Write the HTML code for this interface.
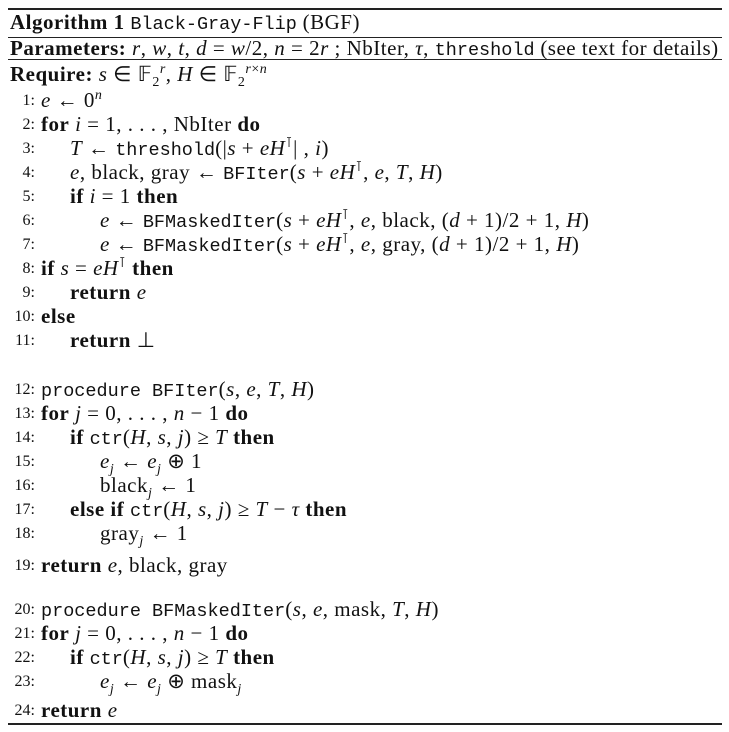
<!DOCTYPE html>
<html><head><meta charset="utf-8"><style>
body{margin:0;width:729px;height:732px;background:#fff;position:relative;overflow:hidden;font-family:"Liberation Serif",serif;color:#111;font-size:21px;letter-spacing:0.5px}
.r{position:absolute;left:8px;width:714px;background:#222}
.l{position:absolute;height:24px;line-height:24px;white-space:nowrap}
.n{position:absolute;right:694px;width:40px;text-align:right;font-size:16px;height:24px;line-height:26px;white-space:nowrap;letter-spacing:0}
i{font-style:italic}
b{font-weight:bold}
.t{font-family:"Liberation Mono",monospace;font-size:18.5px;letter-spacing:0}
sub,sup{font-size:14px;line-height:0}
</style></head><body>
<div class="r" style="top:8px;height:2px"></div>
<div class="l" style="left:10px;top:10px"><b>Algorithm 1</b> <span class="t">Black-Gray-Flip</span> (BGF)</div>
<div class="r" style="top:37px;height:1px"></div>
<div class="l" style="left:10px;top:36px"><b>Parameters:</b> <i>r</i>, <i>w</i>, <i>t</i>, <i>d</i> = <i>w</i>/2, <i>n</i> = 2<i>r</i> ; NbIter, <i>τ</i>, <span class="t">threshold</span> (see text for details)</div>
<div class="r" style="top:59px;height:1px"></div>
<div class="l" style="left:10px;top:62px"><b>Require:</b> <i>s</i> ∈ 𝔽<sub>2</sub><sup><i>r</i></sup>, <i>H</i> ∈ 𝔽<sub>2</sub><sup><i>r</i>×<i>n</i></sup></div>

<div class="n" style="top:88px">1:</div><div class="l" style="left:41px;top:88px"><i>e</i> ← 0<sup><i>n</i></sup></div>
<div class="n" style="top:112px">2:</div><div class="l" style="left:41px;top:112px"><b>for</b> <i>i</i> = 1, . . . , NbIter <b>do</b></div>
<div class="n" style="top:136px">3:</div><div class="l" style="left:70px;top:136px"><i>T</i> ← <span class="t">threshold</span>(|<i>s</i> + <i>eH</i><sup>⊺</sup>| , <i>i</i>)</div>
<div class="n" style="top:160px">4:</div><div class="l" style="left:70px;top:160px"><i>e</i>, black, gray ← <span class="t">BFIter</span>(<i>s</i> + <i>eH</i><sup>⊺</sup>, <i>e</i>, <i>T</i>, <i>H</i>)</div>
<div class="n" style="top:184px">5:</div><div class="l" style="left:70px;top:184px"><b>if</b> <i>i</i> = 1 <b>then</b></div>
<div class="n" style="top:208px">6:</div><div class="l" style="left:100px;top:208px"><i>e</i> ← <span class="t">BFMaskedIter</span>(<i>s</i> + <i>eH</i><sup>⊺</sup>, <i>e</i>, black, (<i>d</i> + 1)/2 + 1, <i>H</i>)</div>
<div class="n" style="top:232px">7:</div><div class="l" style="left:100px;top:232px"><i>e</i> ← <span class="t">BFMaskedIter</span>(<i>s</i> + <i>eH</i><sup>⊺</sup>, <i>e</i>, gray, (<i>d</i> + 1)/2 + 1, <i>H</i>)</div>
<div class="n" style="top:256px">8:</div><div class="l" style="left:41px;top:256px"><b>if</b> <i>s</i> = <i>eH</i><sup>⊺</sup> <b>then</b></div>
<div class="n" style="top:280px">9:</div><div class="l" style="left:70px;top:280px"><b>return</b> <i>e</i></div>
<div class="n" style="top:304px">10:</div><div class="l" style="left:41px;top:304px"><b>else</b></div>
<div class="n" style="top:328px">11:</div><div class="l" style="left:70px;top:328px"><b>return</b> ⊥</div>

<div class="n" style="top:377px">12:</div><div class="l" style="left:41px;top:377px"><span class="t">procedure BFIter</span>(<i>s</i>, <i>e</i>, <i>T</i>, <i>H</i>)</div>
<div class="n" style="top:401px">13:</div><div class="l" style="left:41px;top:401px"><b>for</b> <i>j</i> = 0, . . . , <i>n</i> − 1 <b>do</b></div>
<div class="n" style="top:425px">14:</div><div class="l" style="left:70px;top:425px"><b>if</b> <span class="t">ctr</span>(<i>H</i>, <i>s</i>, <i>j</i>) ≥ <i>T</i> <b>then</b></div>
<div class="n" style="top:449px">15:</div><div class="l" style="left:100px;top:449px"><i>e<sub>j</sub></i> ← <i>e<sub>j</sub></i> ⊕ 1</div>
<div class="n" style="top:473px">16:</div><div class="l" style="left:100px;top:473px">black<sub><i>j</i></sub> ← 1</div>
<div class="n" style="top:497px">17:</div><div class="l" style="left:70px;top:497px"><b>else if</b> <span class="t">ctr</span>(<i>H</i>, <i>s</i>, <i>j</i>) ≥ <i>T</i> − <i>τ</i> <b>then</b></div>
<div class="n" style="top:521px">18:</div><div class="l" style="left:100px;top:521px">gray<sub><i>j</i></sub> ← 1</div>
<div class="n" style="top:553px">19:</div><div class="l" style="left:41px;top:553px"><b>return</b> <i>e</i>, black, gray</div>

<div class="n" style="top:597px">20:</div><div class="l" style="left:41px;top:597px"><span class="t">procedure BFMaskedIter</span>(<i>s</i>, <i>e</i>, mask, <i>T</i>, <i>H</i>)</div>
<div class="n" style="top:621px">21:</div><div class="l" style="left:41px;top:621px"><b>for</b> <i>j</i> = 0, . . . , <i>n</i> − 1 <b>do</b></div>
<div class="n" style="top:645px">22:</div><div class="l" style="left:70px;top:645px"><b>if</b> <span class="t">ctr</span>(<i>H</i>, <i>s</i>, <i>j</i>) ≥ <i>T</i> <b>then</b></div>
<div class="n" style="top:669px">23:</div><div class="l" style="left:100px;top:669px"><i>e<sub>j</sub></i> ← <i>e<sub>j</sub></i> ⊕ mask<sub><i>j</i></sub></div>
<div class="n" style="top:698px">24:</div><div class="l" style="left:41px;top:698px"><b>return</b> <i>e</i></div>
<div class="r" style="top:723px;height:2px"></div>
</body></html>
